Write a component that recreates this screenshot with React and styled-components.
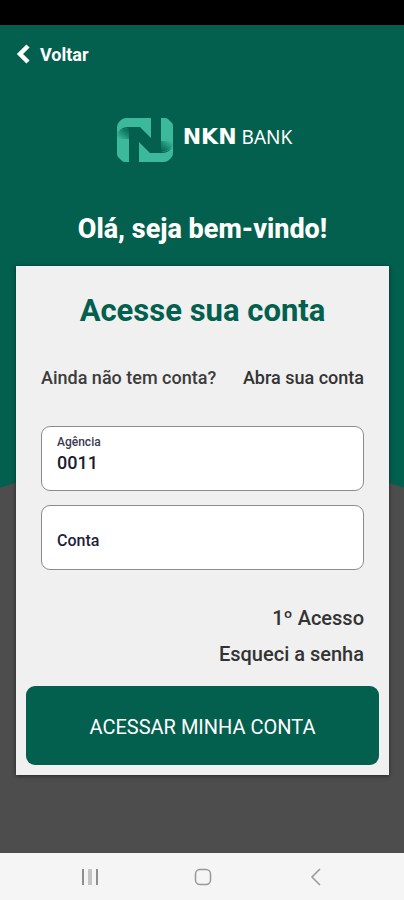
import React, { useState } from 'react';
import styled, { createGlobalStyle } from 'styled-components';

const GlobalStyle = createGlobalStyle`
  * {
    box-sizing: border-box;
  }
  body {
    margin: 0;
    font-family: Roboto, "Liberation Sans", sans-serif;
    color: #3c3c3c;
  }
`;

const Page = styled.div`
  display: flex;
  flex-direction: column;
  min-height: 100vh;
`;

const StatusBar = styled.div`
  height: 25px;
  background: #000;
`;

const Screen = styled.main`
  flex: 1;
  display: flex;
  flex-direction: column;
  padding: 15px 15px 78px 16px;
  background: radial-gradient(circle at 50% 1101px, #4d4d4d 669px, #035f4e 670px);
`;

const BackLink = styled.a`
  align-self: flex-start;
  display: flex;
  align-items: center;
  gap: 8px;
  height: 28px;
  color: #fff;
  font-size: 18px;
  font-weight: 700;
  text-decoration: none;
`;

const Brand = styled.div`
  display: flex;
  align-items: center;
  justify-content: center;
  gap: 10px;
  margin-top: 49px;
  padding-left: 4px;
  height: 46px;
  color: #fff;
`;

const BrandName = styled.div`
  display: flex;
  align-items: baseline;
  gap: 5px;
  padding-bottom: 6px;
  font-family: "Noto Sans", "Open Sans", sans-serif;
  font-size: 19px;
  line-height: 24px;
  font-weight: 400;

  strong {
    font-family: "DejaVu Sans", sans-serif;
    font-size: 22px;
    font-weight: 700;
  }
`;

const Welcome = styled.h1`
  margin: 49px 0 19px;
  color: #fff;
  font-size: 27px;
  line-height: 35px;
  font-weight: 800;
  text-align: center;
`;

const Card = styled.form`
  display: flex;
  flex-direction: column;
  padding: 25px 10px 10px;
  background: #f0f0f0;
  box-shadow: 0 1px 4px rgba(0, 0, 0, 0.5);
`;

const CardBody = styled.div`
  display: flex;
  flex-direction: column;
  padding: 0 15px;
`;

const Title = styled.h2`
  margin: 0;
  color: #035f4e;
  font-size: 31px;
  line-height: 40px;
  font-weight: 700;
  text-align: center;
`;

const SignUp = styled.div`
  display: flex;
  justify-content: space-between;
  margin: 35px 0 36px;
  font-size: 18px;
  line-height: 24px;
  font-weight: 500;
`;

const TextLink = styled.a`
  color: #333;
  font-size: ${props => props.$large ? '20px' : '18px'};
  line-height: 24px;
  font-weight: 500;
  text-decoration: none;
`;

const Field = styled.div`
  display: flex;
  flex-direction: column;
  justify-content: center;
  height: 65px;
  margin-bottom: 14px;
  padding: 4px 15px ${props => props.$floating ? '12px' : '0'};
  background: #fff;
  border: 1px solid #8c8c8c;
  border-radius: 9px;
`;

const Label = styled.label`
  color: #3b3a52;
  font-size: 12px;
  line-height: 16px;
  font-weight: 500;
`;

const Input = styled.input`
  width: 100%;
  height: 26px;
  padding: 0;
  border: 0;
  outline: 0;
  background: transparent;
  color: #1d1c2e;
  font-family: inherit;
  font-size: 18px;
  font-weight: 500;

  &::placeholder {
    color: #1f1e3c;
    font-size: 16px;
    opacity: 1;
  }
`;

const Help = styled.nav`
  display: flex;
  flex-direction: column;
  align-items: flex-end;
  gap: 12px;
  margin: 22px 0 20px;
`;

const Submit = styled.button`
  height: 79px;
  padding: 2px 0 0;
  border: 0;
  border-radius: 9px;
  background: #035f4e;
  color: #fff;
  font-family: inherit;
  font-size: 20px;
  font-weight: 400;
`;

const SystemNav = styled.nav`
  display: flex;
  justify-content: center;
  gap: 89px;
  height: 47px;
  padding-left: 2px;
  background: #f5f5f5;
`;

const SystemButton = styled.button`
  display: flex;
  align-items: center;
  justify-content: center;
  width: 24px;
  height: 47px;
  padding: 0;
  border: 0;
  background: transparent;
`;

// the mark is one ribbon half drawn twice, the second turned by 180 degrees
const RibbonHalf = () => (
  <>
    <path d="M0 17 V9 Q0 6 2 4 L4 2 Q6 0 9 0 H34 V20 L23 9 H11 Q3 9 0 17 Z" fill="#3cb99b" />
    <path d="M0 16 Q4 10 12 10 V44 H8 Q6 44 5 43 L1 39 Q0 38 0 36 Z" fill="#3cb99b" />
    <path d="M0 17 Q4 10 12 10 V21 H0 Z" fill="url(#fold)" />
  </>
);

const LogoMark = () => (
  <svg width="56" height="45" viewBox="0 0 56 45" aria-hidden="true">
    <defs>
      <linearGradient id="fold" x1="1" y1="0" x2="0.2" y2="1">
        <stop offset="0" stopColor="#07604f" />
        <stop offset="0.4" stopColor="#158068" />
        <stop offset="1" stopColor="#3cb99b" />
      </linearGradient>
    </defs>
    <RibbonHalf />
    <g transform="rotate(180 28 22)">
      <RibbonHalf />
    </g>
  </svg>
);

const BackArrow = () => (
  <svg width="16" height="20" viewBox="0 0 16 20" aria-hidden="true">
    <path d="M12 2 L4 10 L12 18" fill="none" stroke="#fff" strokeWidth="4.5" />
  </svg>
);

const App = () => {
  const [agency, setAgency] = useState('0011');
  const [account, setAccount] = useState('');

  return (
    <Page>
      <GlobalStyle />
      <StatusBar />
      <Screen>
        <BackLink href="#voltar">
          <BackArrow />
          Voltar
        </BackLink>

        <Brand>
          <LogoMark />
          <BrandName>
            <strong>NKN</strong>
            <span>BANK</span>
          </BrandName>
        </Brand>

        <Welcome>Olá, seja bem-vindo!</Welcome>

        <Card onSubmit={(event) => { event.preventDefault(); }}>
          <CardBody>
            <Title>Acesse sua conta</Title>
            <SignUp>
              <span>Ainda não tem conta?</span>
              <TextLink href="#abrir">Abra sua conta</TextLink>
            </SignUp>

            <Field $floating>
              <Label htmlFor="agencia">Agência</Label>
              <Input id="agencia" inputMode="numeric" value={agency} onChange={(event) => { setAgency(event.target.value); }} />
            </Field>
            <Field>
              <Input id="conta" aria-label="Conta" placeholder="Conta" inputMode="numeric" value={account} onChange={(event) => { setAccount(event.target.value); }} />
            </Field>

            <Help>
              <TextLink $large href="#acesso">1º Acesso</TextLink>
              <TextLink $large href="#senha">Esqueci a senha</TextLink>
            </Help>
          </CardBody>
          <Submit type="submit">ACESSAR MINHA CONTA</Submit>
        </Card>
      </Screen>

      <SystemNav>
        <SystemButton type="button" aria-label="Recentes">
          <svg width="18" height="18" viewBox="0 0 18 18" fill="none">
            <path d="M2 1 V17 M16 1 V17" stroke="#8f8f8f" strokeWidth="2" />
            <path d="M9 1 V17" stroke="#c4c4c4" strokeWidth="4" />
          </svg>
        </SystemButton>
        <SystemButton type="button" aria-label="Início">
          <svg width="18" height="18" viewBox="0 0 18 18" fill="none" stroke="#989898" strokeWidth="1.5">
            <rect x="1.5" y="1.5" width="15" height="15" rx="4.5" />
          </svg>
        </SystemButton>
        <SystemButton type="button" aria-label="Voltar">
          <svg width="18" height="18" viewBox="0 0 18 18" fill="none" stroke="#989898" strokeWidth="1.5">
            <path d="M13 1 L5 9 L13 17" />
          </svg>
        </SystemButton>
      </SystemNav>
    </Page>
  );
};

export default App;
